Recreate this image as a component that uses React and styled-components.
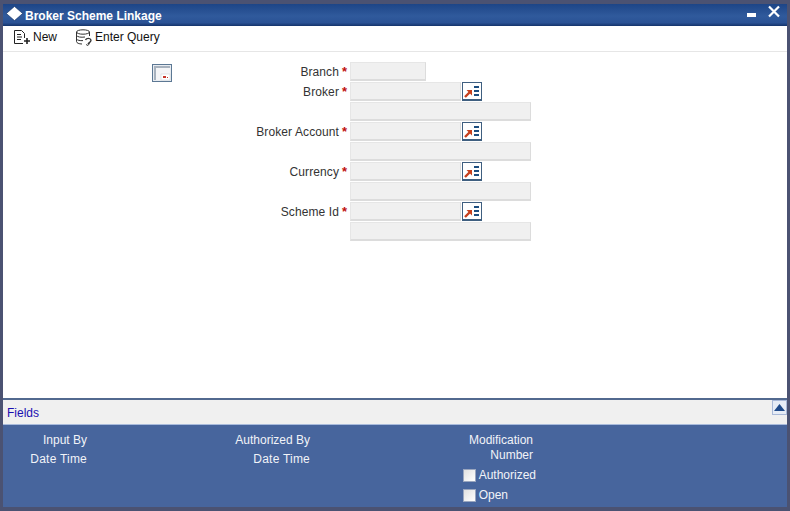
import styled, { createGlobalStyle } from "styled-components";

const GlobalStyle = createGlobalStyle`
  html, body {
    margin: 0;
    padding: 0;
    background: #4b5272;
  }
  body {
    font-family: "Liberation Sans", Arial, sans-serif;
    font-size: 12px;
  }
`;

const Frame = styled.div`
  width: 790px;
  height: 511px;
  box-sizing: border-box;
  padding: 4px 3px 4px 3px;
  display: flex;
  background: #4b5272;
`;

const Win = styled.div`
  flex: 1;
  display: flex;
  flex-direction: column;
  background: #fff;
  min-width: 0;
`;

const TitleBar = styled.div`
  height: 22px;
  flex: none;
  display: flex;
  align-items: center;
  background: linear-gradient(#1d4587, #305a9c 55%, #2a5295 85%, #14336b);
  color: #fff;
  font-size: 12px;
  font-weight: 700;
  padding-left: 3px;
`;

const Diamond = styled.svg`
  margin-bottom: 3px;
`;

const TitleText = styled.span`
  margin: 1px 0 0 2px;
`;

const TitleButtons = styled.div`
  margin-left: auto;
  display: flex;
  align-items: flex-start;
  gap: 11px;
  padding-right: 7px;
  height: 100%;
`;

const Toolbar = styled.div`
  height: 25px;
  flex: none;
  box-sizing: content-box;
  display: flex;
  align-items: center;
  gap: 18px;
  padding-left: 10px;
  border-bottom: 1px solid #e6e6e6;
`;

const ToolButton = styled.div`
  display: flex;
  align-items: center;
  gap: 2px;
  margin-bottom: 3px;
  color: #111;
  font-size: 12px;
`;

const Body = styled.div`
  flex: 1;
  display: flex;
  padding-top: 10px;
  min-height: 0;
`;

const OptionsCol = styled.div`
  width: 169px;
  flex: none;
  display: flex;
  justify-content: flex-end;
  align-items: flex-start;
  padding-top: 2px;
`;

const Form = styled.div`
  display: flex;
  flex-direction: column;
  gap: 1px;
`;

const LookupGroup = styled.div`
  display: flex;
  flex-direction: column;
  gap: 1px;
`;

const Row = styled.div`
  display: flex;
  align-items: center;
  height: 19px;
`;

const Label = styled.label`
  width: 167px;
  box-sizing: border-box;
  text-align: right;
  color: #333;
  font-size: 12px;
  letter-spacing: 0.1px;
`;

const Star = styled.span`
  width: 11px;
  flex: none;
  box-sizing: border-box;
  padding-left: 3px;
  color: #c0100c;
  font-size: 13px;
  font-weight: 700;
  line-height: 12px;
`;

const Field = styled.div`
  width: ${(p) => p.$w}px;
  height: 19px;
  box-sizing: border-box;
  background: #f0f0f0;
  border: 1px solid #e6e6e6;
  border-right-color: #dcdcdc;
  border-bottom: 2px solid #dcdcdc;
`;

const Spacer = styled.div`
  width: 178px;
  flex: none;
`;

const ListButton = styled.div`
  width: 20px;
  height: 19px;
  margin-left: 1px;
  box-sizing: border-box;
  background: #fff;
  border: 1px solid #3f5f80;
  border-bottom-width: 2px;
  display: flex;
  align-items: center;
  justify-content: center;
`;

const FieldsBar = styled.div`
  height: 27px;
  flex: none;
  box-sizing: border-box;
  display: flex;
  align-items: center;
  justify-content: space-between;
  padding: 1px 0 0 4px;
  background: #f0f0f0;
  border-top: 2px solid #52698f;
  border-bottom: 1px solid #a9bbdc;
  color: #1a0fb0;
  font-size: 12px;
`;

const Collapse = styled.div`
  width: 15px;
  height: 15px;
  align-self: flex-start;
  margin-top: -1px;
  box-sizing: border-box;
  border: 1px solid #a9b9d8;
  background: #e6ecf6;
  display: flex;
  align-items: center;
  justify-content: center;
`;

const Footer = styled.div`
  height: 82px;
  flex: none;
  box-sizing: border-box;
  display: flex;
  padding-top: 8px;
  background: #47659d;
  color: #f1f3f8;
  font-size: 12px;
`;

const AuditCol = styled.div`
  width: ${(p) => p.$w}px;
  flex: none;
  display: flex;
  flex-direction: column;
  align-items: flex-end;
  gap: ${(p) => p.$gap}px;
  line-height: 14px;
`;

const DateTime = styled.span`
  letter-spacing: 0.22px;
`;

const CheckGroup = styled.div`
  display: flex;
  flex-direction: column;
  gap: 6px;
  margin: 5px -3px 0 0;
`;

const CheckRow = styled.div`
  display: flex;
  align-items: center;
  gap: 3px;
  height: 14px;
`;

const CheckBox = styled.span`
  width: 13px;
  height: 13px;
  box-sizing: border-box;
  background: linear-gradient(135deg, #e0e0e0, #ffffff);
  border: 1px solid #9aa6bf;
`;

const DiamondIcon = () => (
  <Diamond width="17" height="15" viewBox="0 0 17 15">
    <path d="M8.5 0.4 L16.6 7.5 L8.5 14.6 L0.4 7.5 Z" fill="#fff" stroke="#16305f" strokeWidth="0.6" />
  </Diamond>
);

const MinimizeIcon = () => (
  <svg width="10" height="22" viewBox="0 0 10 22">
    <rect x="0" y="9" width="9" height="4" fill="#fff" />
  </svg>
);

const CloseIcon = () => (
  <svg width="12" height="22" viewBox="0 0 12 22">
    <path d="M1 2.5 L11 12.5 M11 2.5 L1 12.5" stroke="#fff" strokeWidth="2.2" fill="none" />
  </svg>
);

const NewIcon = () => (
  <svg width="18" height="16" viewBox="0 0 18 16" fill="none" stroke="#222" strokeWidth="1">
    <path d="M1.5 14.5 V1.5 H8.5 L11.5 4.5 V9" />
    <path d="M1.5 14.5 H10" />
    <path d="M4 5.5 H8 M4 8 H9 M4 10.5 H8" />
    <path d="M14 9 V15 M11 12 H17" strokeWidth="1.6" />
  </svg>
);

const QueryIcon = () => (
  <svg width="18" height="17" viewBox="0 0 18 17" fill="none" stroke="#333" strokeWidth="1">
    <ellipse cx="8" cy="3" rx="6.5" ry="2.2" />
    <path d="M1.5 3 V12.5 C1.5 14 4 15 7 15" />
    <path d="M14.5 3 V7" />
    <path d="M1.5 6.5 C2.5 8 6 8.6 10 8" />
    <path d="M1.5 10 C2.5 11.4 5 11.8 8 11.6" />
    <path d="M10.5 11 C11.5 8.8 15.5 8.8 16 11.2 C16.2 13 14 13.5 13 15" strokeWidth="1.4" />
    <path d="M11 15.5 L13 16.5 L14.5 14.5" strokeWidth="0.9" />
  </svg>
);

const OptionsIcon = () => (
  <svg width="20" height="18" viewBox="0 0 20 18">
    <rect x="0.5" y="0.5" width="19" height="17" fill="#e8ecf1" stroke="#5c7894" />
    <path d="M3 16 V3 H18" fill="none" stroke="#a8b2be" strokeWidth="2" />
    <rect x="4" y="4" width="14" height="12" fill="#f4f5f7" />
    <rect x="9" y="10" width="9" height="6" fill="#fff" stroke="#c8cdd4" strokeWidth="0.5" />
    <rect x="11" y="12" width="3" height="2" fill="#c6352a" />
    <rect x="15" y="13" width="1" height="1" fill="#c6352a" />
  </svg>
);

const ListIcon = () => (
  <svg width="16" height="13" viewBox="0 0 16 13">
    <path d="M1 12 L6 7" stroke="#c8401c" strokeWidth="2.4" />
    <path d="M2.5 5 H8 V10.5 Z" fill="#c8401c" />
    <rect x="10" y="1" width="5" height="2" fill="#1d4e80" />
    <rect x="10" y="5" width="5" height="2" fill="#1d4e80" />
    <rect x="10" y="9" width="5" height="2" fill="#1d4e80" />
  </svg>
);

const UpIcon = () => (
  <svg width="11" height="7" viewBox="0 0 11 7">
    <path d="M5.5 0 L11 7 H0 Z" fill="#1f4a8a" />
  </svg>
);

const lookups = ["Broker", "Broker Account", "Currency", "Scheme Id"];

const App = () => (
  <>
    <GlobalStyle />
    <Frame>
      <Win>
        <TitleBar>
          <DiamondIcon />
          <TitleText>Broker Scheme Linkage</TitleText>
          <TitleButtons>
            <MinimizeIcon />
            <CloseIcon />
          </TitleButtons>
        </TitleBar>
        <Toolbar>
          <ToolButton>
            <NewIcon />
            New
          </ToolButton>
          <ToolButton>
            <QueryIcon />
            Enter Query
          </ToolButton>
        </Toolbar>
        <Body>
          <OptionsCol>
            <OptionsIcon />
          </OptionsCol>
          <Form>
            <Row>
              <Label>Branch</Label>
              <Star>*</Star>
              <Field $w={76} />
            </Row>
            {lookups.map((name) => (
              <LookupGroup key={name}>
                <Row>
                  <Label>{name}</Label>
                  <Star>*</Star>
                  <Field $w={111} />
                  <ListButton>
                    <ListIcon />
                  </ListButton>
                </Row>
                <Row>
                  <Spacer />
                  <Field $w={181} />
                </Row>
              </LookupGroup>
            ))}
          </Form>
        </Body>
        <FieldsBar>
          Fields
          <Collapse>
            <UpIcon />
          </Collapse>
        </FieldsBar>
        <Footer>
          <AuditCol $w={84} $gap={5}>
            <span>Input By</span>
            <DateTime>Date Time</DateTime>
          </AuditCol>
          <AuditCol $w={223} $gap={5}>
            <span>Authorized By</span>
            <DateTime>Date Time</DateTime>
          </AuditCol>
          <AuditCol $w={223} $gap={1}>
            <span>Modification</span>
            <span>Number</span>
            <CheckGroup>
              <CheckRow>
                <CheckBox />
                Authorized
              </CheckRow>
              <CheckRow>
                <CheckBox />
                Open
              </CheckRow>
            </CheckGroup>
          </AuditCol>
        </Footer>
      </Win>
    </Frame>
  </>
);

export default App;
